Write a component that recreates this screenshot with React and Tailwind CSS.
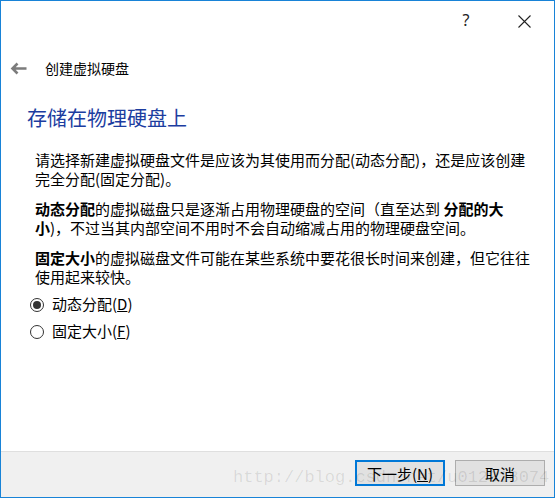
import React from "react";

const cjk = { fontFamily: '"Noto Sans CJK SC", "Noto Sans", sans-serif' };

const Radio = ({ checked, label, hotkey }) => (
  <label className="flex items-center h-[27px] pl-[29px] gap-[8px] text-[15px] text-black">
    <span className="w-[14px] h-[14px] rounded-full border border-[#333] bg-white flex items-center justify-center">
      {checked && <span className="w-[8px] h-[8px] rounded-full bg-[#333]" />}
    </span>
    <span>
      {label}(<u>{hotkey}</u>)
    </span>
  </label>
);

export default function App() {
  return (
    <div
      className="w-[555px] h-[498px] border border-[#1883d7] bg-white flex flex-col relative overflow-hidden"
      style={cjk}
    >
      {/* title bar */}
      <div className="h-[40px] flex justify-end items-center pr-[1px]">
        <div className="w-[58px] flex justify-center text-[16px] text-[#222] leading-none pb-[2px]" style={{ fontFamily: '"Noto Sans", sans-serif' }}>
          ?
        </div>
        <div className="w-[58px] flex justify-center">
          <svg width="13" height="13" viewBox="0 0 13 13">
            <path d="M0.5 0.5L12.5 12.5M12.5 0.5L0.5 12.5" stroke="#222" strokeWidth="1.1" fill="none" />
          </svg>
        </div>
      </div>

      {/* back + wizard title */}
      <div className="h-[54px] flex items-center pl-[9px]">
        <svg width="17" height="13" viewBox="0 0 17 13">
          <path d="M16.5 6.5H2.5M7.5 1.5L2.5 6.5L7.5 11.5" stroke="#7c7c7c" strokeWidth="2.6" fill="none" />
        </svg>
        <span className="ml-[18px] text-[14px] text-black">创建虚拟硬盘</span>
      </div>

      {/* heading */}
      <div className="pt-[9px] pl-[26px] text-[20px] leading-[28px] text-[#1c3d9f]">存储在物理硬盘上</div>

      {/* body */}
      <div className="pl-[34px] w-[536px] mt-[18px] text-[15px] leading-[19px] text-black">
        <p className="mb-[11px]">请选择新建虚拟硬盘文件是应该为其使用而分配(动态分配)，还是应该创建完全分配(固定分配)。</p>
        <p className="mb-[11px]">
          <b className="leading-[19px]">动态分配</b>的虚拟磁盘只是逐渐占用物理硬盘的空间（直至达到 <b className="leading-[19px]">分配的大小</b>)，不过当其内部空间不用时不会自动缩减占用的物理硬盘空间。
        </p>
        <p>
          <b className="leading-[19px]">固定大小</b>的虚拟磁盘文件可能在某些系统中要花很长时间来创建，但它往往使用起来较快。
        </p>
      </div>

      <div className="mt-[5px]">
        <Radio checked label="动态分配" hotkey="D" />
        <Radio label="固定大小" hotkey="F" />
      </div>

      {/* footer */}
      <div className="mt-auto h-[46px] border-t border-[#dfdfdf] bg-[#f0f0f0] flex justify-end items-start pt-[8px] pr-[9px] gap-[10px]">
        <button className="w-[90px] h-[26px] border-2 border-[#0078d7] bg-[#e1e1e1] text-[15px] text-black leading-none flex items-center justify-center">
          下一步(<u>N</u>)
        </button>
        <button className="w-[90px] h-[26px] border border-[#adadad] bg-[#e1e1e1] text-[15px] text-black leading-none flex items-center justify-center">
          取消
        </button>
      </div>

      {/* watermark */}
      <div
        className="absolute left-[232px] top-[466px] text-[17px] leading-[22px] text-black/10 pointer-events-none whitespace-nowrap"
        style={{ fontFamily: '"Liberation Mono", monospace' }}
      >
        http://blog.csdn.net/u012318074
      </div>
    </div>
  );
}
